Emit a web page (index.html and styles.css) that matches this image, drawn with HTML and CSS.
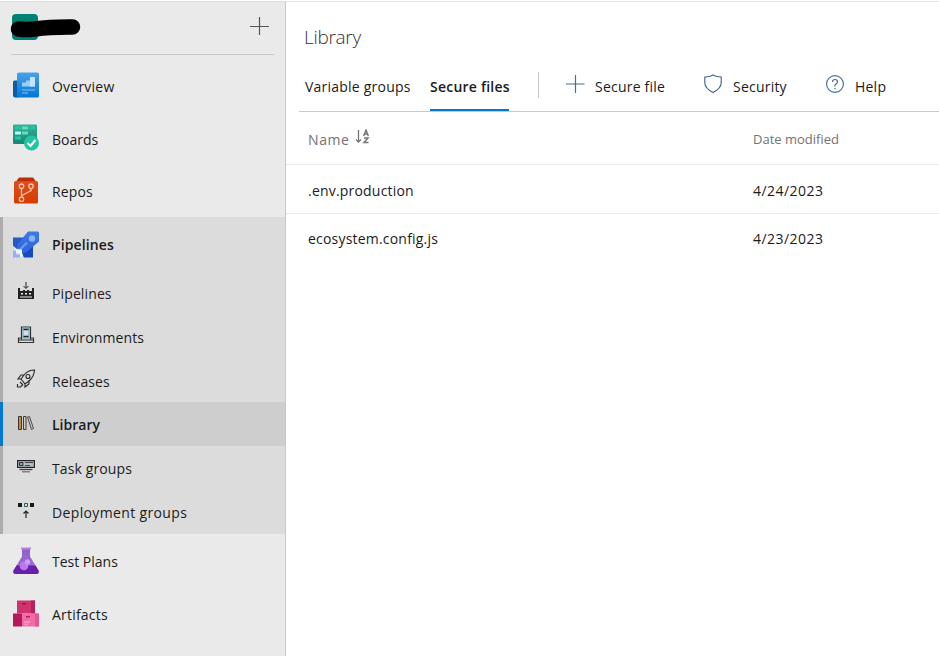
FILE: index.html
```
<!DOCTYPE html>
<html lang="en">
<head>
<meta charset="utf-8">
<title>Library</title>
<link rel="stylesheet" href="styles.css">
</head>
<body>
<div class="app">
  <nav class="sidebar">
    <header class="project">
      <svg class="project-logo" width="74" height="28" viewBox="0 0 74 28"><rect x="3" y="0" width="26" height="26" rx="4" fill="#008272"/><path d="M9.500 15 Q17 16 26 15 Q40 12.8 63.500 13" fill="none" stroke="#000" stroke-width="15.5" stroke-linecap="round"/></svg>
      <svg width="19" height="19" viewBox="0 0 19 19"><path d="M9.5 0V18M0 9.5H19" stroke="#555" stroke-width="1.2"/></svg>
    </header>
    <a class="item"><svg class="icon" viewBox="0 0 26 26"><defs><linearGradient id="ov" x1="0" y1="0" x2="0" y2="1"><stop stop-color="#4da0e8"/><stop offset="1" stop-color="#0078d7"/></linearGradient></defs><path d="M0 9.5Q0 8 1.5 8H6V25H2Q0 25 0 23Z" fill="#0d5ca5"/><rect x="4" width="22" height="25" rx="1.500" fill="url(#ov)"/><path d="M9 13V10H13V8H17V4.500H22V14H9Z" fill="#9ccdf5"/><path d="M17 4.500H22V14H17Z" fill="#c7e4fb"/><path d="M9 17.500H22M9 20.500H15" stroke="#83c1f5"/></svg><span class="label overview">Overview</span></a>
    <a class="item"><svg class="icon" viewBox="0 0 26 26"><defs><linearGradient id="bd" x1="0" y1="0" x2="0" y2="1"><stop stop-color="#37b095"/><stop offset="1" stop-color="#178477"/></linearGradient></defs><rect width="24" height="19.500" rx="1" fill="url(#bd)"/><path d="M2 2H8V5H2ZM16 2H22V5H16ZM2 12H8V15H2Z" fill="#21c5a5"/><path d="M9 2H15V5H9ZM9 7H15V10H9Z" fill="#5de0bb"/><path d="M2 7H8V10H2Z" fill="#b0fff0"/><circle cx="18.500" cy="18.500" r="7.500" fill="#20c5a5"/><path d="M14.500 18.500 17.500 21.500 22.500 15.500" fill="none" stroke="#fff" stroke-width="2"/></svg><span class="label boards">Boards</span></a>
    <a class="item"><svg class="icon" viewBox="0 0 26 26"><defs><linearGradient id="rp" x1="0" y1="0" x2="0" y2="1"><stop stop-color="#d94f20"/><stop offset="1" stop-color="#d83b01"/></linearGradient></defs><path d="M3 4 6 0H20L23 4Z" fill="#b92e08"/><path d="M1 5Q1 3.500 2.500 3.500H23.500Q25 3.500 25 5V24.500Q25 26 23.500 26H2.500Q1 26 1 24.500Z" fill="url(#rp)"/><g fill="none" stroke="#ffc1a6" stroke-width="1.300"><circle cx="8.500" cy="8.700" r="2.200"/><circle cx="18" cy="8.700" r="2.200"/><circle cx="8.500" cy="21.700" r="2.200"/><path d="M8.500 11V19.500M18 11V13L9 18"/></g></svg><span class="label repos">Repos</span></a>
    <section class="group">
      <a class="item strong"><svg class="icon" viewBox="0 0 26 26"><defs><linearGradient id="pl" x1="0" y1="0" x2="0" y2="1"><stop stop-color="#4078e8"/><stop offset="1" stop-color="#2c64d9"/></linearGradient></defs><path d="M0 6H12L4 18 0 14Z" fill="#2858c4"/><path d="M20 13V26H11L9 22Z" fill="#1748bd"/><path d="M15 0H24.500Q26 0 26 1.500V10L13 21 10 22 4 16 5 12Z" fill="url(#pl)"/><circle cx="19" cy="7" r="3.200" fill="#8bb1fa"/><path d="M6 19 14 11" stroke="#6e9af4" stroke-width="2"/><path d="M2 16 4 18H9V22L10 24 7 26V22L1 21Z" fill="#eef4ff"/><path d="M0 19H3V23H7V26H0Z" fill="#91b2f5"/></svg><span class="label pipes">Pipelines</span></a>
      <a class="sub"><svg class="glyph" viewBox="0 0 18 18"><path d="M9 0V6M6.500 4 9 6.500 11.500 4" fill="none" stroke="#222"/><path d="M1 6H3V9H6V8H8V9H10V8H12V9H15V6H17V17H1Z" fill="#222"/><path d="M4 11H6V12.500H4ZM8 11H10V12.500H8ZM12 11H14V12.500H12ZM3 14.500H15V15.500H3Z" fill="#eee"/></svg><span class="label subpipes">Pipelines</span></a>
      <a class="sub"><svg class="glyph" viewBox="0 0 18 18"><path d="M4.500 13.500V1H13.500V13.500M4.500 12H1.500V16.500H16.500V12H13.500M2 14H16" fill="none" stroke="#333" stroke-width="1.200"/><path d="M6 2V12H12V2Z" fill="none" stroke="#51a7ce"/><path d="M6.500 3.500H11.500M6.500 10.500H11.500" stroke="#222" stroke-width="1.300"/></svg><span class="label env">Environments</span></a>
      <a class="sub"><svg class="glyph wide" viewBox="0 0 20 20"><g fill="none" stroke="#2b2b2b" stroke-width="1.150"><path d="M18.500 1Q12 1 8 6L5 10 9 15 13 12Q18 8 18.500 1ZM8 6H5L2 10H5M13 11V15L9 18V15M4 13 7 16M1.500 15V18H4.500L7 15.500"/><circle cx="12" cy="7.500" r="2"/></g></svg><span class="label rel">Releases</span></a>
      <a class="sub selected"><svg class="glyph" viewBox="0 0 18 18"><path d="M1.500 2.500H4.500V15.500H1.500Z" fill="#bf8c45" stroke="#3b352c"/><path d="M6.500 2.500H9V15.500H6.500Z" fill="#d4cec2" stroke="#3a3a42"/><path d="M10.500 3 12.500 2.500 16.500 14.500 14.500 15.500Z" fill="#b8c8ce" stroke="#594b42"/></svg><span class="label lib">Library</span></a>
      <a class="sub"><svg class="glyph" viewBox="0 0 18 18"><rect x=".6" y="2.600" width="16.800" height="6.800" fill="#bbb" stroke="#27222e" stroke-width="1.200"/><path d="M2.500 4.500H6V7.500H2.500Z" fill="#78a9bf" stroke="#333"/><path d="M8 4.500H16M8 7.500H13" stroke="#444"/><path d="M2.500 11.500H15.500" stroke="#444" stroke-width="1.400"/><path d="M5 13.800H13" stroke="#777" stroke-width="1.300"/></svg><span class="label task">Task groups</span></a>
      <a class="sub"><svg class="glyph" viewBox="0 0 18 18"><path d="M1 1H5V5H1ZM13 1H17V5H13Z" fill="#181818"/><path d="M7.500 1.500H10.500V4.500H7.500Z" fill="none" stroke="#255c72"/><path d="M9 16V9M6.500 11.500 9 9 11.500 11.500" fill="none" stroke="#252525" stroke-width="1.200"/></svg><span class="label deploy">Deployment groups</span></a>
    </section>
    <a class="item"><svg class="icon" viewBox="0 0 26 26"><defs><linearGradient id="tp" x1="0" y1="0" x2="0" y2="1"><stop stop-color="#9060c6"/><stop offset="1" stop-color="#a56de0"/></linearGradient></defs><path d="M9 1H17V9L25.500 23Q26.500 26.500 23 26.500H3Q-.5 26.500 .5 23L9 9Z" fill="url(#tp)"/><path d="M3.500 18H22.500L25.500 23Q26.500 26.500 23 26.500H3Q-.5 26.500 .5 23Z" fill="#671fac"/><path d="M8 0H18V2H8Z" fill="#b883e5"/><circle cx="11" cy="18.500" r="4.300" fill="#b77ae9"/><circle cx="14.500" cy="14.500" r="2.700" fill="#c99cf0"/></svg><span class="label test">Test Plans</span></a>
    <a class="item"><svg class="icon" viewBox="0 0 26 26"><path d="M4 0H22V13H4Z" fill="#cf3470"/><path d="M18 0H22V13H18Z" fill="#b82060"/><path d="M0 13H9V26H0Z" fill="#b4195b"/><path d="M9 13H26V26H9Z" fill="#f06ca4"/><path d="M22 13H26V26H22Z" fill="#e35693"/><path d="M9 2.500H13V4H9Z" fill="#9d174d"/><path d="M4 15.500H8V17H4ZM13 15.500H17V17H13Z" fill="#bd1c5f"/><path d="M11 21.500H17M11 24H15" stroke="#f69dc1" stroke-width="1.500"/></svg><span class="label art">Artifacts</span></a>
  </nav>
  <main class="content">
    <h1 class="title"><span class="title-text">Library</span></h1>
    <div class="toolbar">
      <span class="tab first"><span class="vg">Variable groups</span></span>
      <span class="tab active"><span class="sf">Secure files</span></span>
      <span class="divider"></span>
      <a class="command add"><svg width="20" height="20" viewBox="0 0 20 20"><path d="M10.500 1V19M1 10H19.500" stroke="#486991" stroke-width="1.200"/></svg><span class="cf">Secure file</span></a>
      <a class="command security"><svg width="20" height="20" viewBox="0 0 20 20"><path d="M10 1Q7 3 1.800 3V9Q2 14.500 10 18.500Q18 14.500 18.200 9V3Q13 3 10 1Z" fill="none" stroke="#3f6791" stroke-width="1.150"/></svg><span class="sec">Security</span></a>
      <a class="command helplink"><svg width="20" height="20" viewBox="0 0 20 20"><circle cx="10" cy="10" r="8.400" fill="none" stroke="#44709b" stroke-width="1.150"/><path d="M7.500 8Q7.500 5.500 10 5.500T12.500 8Q12.500 9 11 10T10 12.500M10 14V15.300" fill="none" stroke="#526786" stroke-width="1.200"/></svg><span class="hlp">Help</span></a>
    </div>
    <div class="row head"><span class="name"><span class="nm">Name</span><svg class="sort" width="16" height="16" viewBox="0 0 16 16"><path d="M3.500 1V13M1 10.500 3.500 13 6 10.500" fill="none" stroke="#777" stroke-width="1.300"/><path d="M8.700 7 11 1 13.300 7M9.500 5H12.500M9 9H13L9 13.500H13.500" fill="none" stroke="#777" stroke-width="1.500"/></svg></span><span class="date"><span class="dm">Date modified</span></span></div>
    <div class="row first-row"><span class="name"><span class="envp">.env.production</span></span><span class="date"><span class="d">4/24/2023</span></span></div>
    <div class="row last"><span class="name"><span class="eco">ecosystem.config.js</span></span><span class="date"><span class="d">4/23/2023</span></span></div>
  </main>
</div>
</body>
</html>
```
FILE: styles.css
```
* { box-sizing: border-box; }
body { margin: 0; background: #fff; color: #1b1b1b; font: 14px/20px "Open Sans", "Noto Sans", sans-serif; overflow: hidden; }
.app { display: flex; height: 656px; border-top: 1px solid #fff; }
.sidebar { width: 286px; flex-shrink: 0; background: #eaeaea; border-right: 1px solid #c8c8c8; border-top: 1px solid #dcdcdc; }
.project { height: 53px; margin: 0 11px; padding: 12px 5px 0 0; display: flex; justify-content: space-between; border-bottom: 1px solid #c8c8c8; }
.project > svg:last-child { margin-top: 3px; }
.project-logo { margin-left: -2px; }
.project + .item { margin-top: 5px; }
.item { height: 52.330px; padding-left: 13px; display: flex; align-items: center; }
.sidebar > .item .label { padding-top: 2px; }
.sidebar > .item .boards { padding-top: 3px; }
.icon { width: 26px; height: 27px; margin-right: 13px; margin-top: -1px; overflow: visible; }
.group { height: 317px; background: #dcdcdc; border-left: 3px solid #adadad; }
.group .item { height: 54px; padding-left: 10px; }
.strong .label { padding-top: 2px; }
.strong .icon { margin-top: 1px; }
.strong, .selected { font-weight: 600; }
.sub { height: 43.830px; padding-left: 14px; display: flex; align-items: center; }
.sub .label { padding-top: 2px; }
.glyph { width: 18px; height: 18px; margin-right: 17px; margin-top: -3px; }
.glyph.wide { width: 20px; height: 20px; margin-left: -1px; margin-right: 16px; }
.selected { margin-left: -3px; border-left: 3px solid #0078d4; background: #cecece; }
.group + .item, .group + .item + .item { height: 53px; }
.sidebar > .group + .item .label, .sidebar > .group + .item + .item .label { padding-top: 3px; }
.group + .item .icon, .group + .item + .item .icon { margin-top: 0; }
.overview { letter-spacing: .22px; }
.repos, .pipes, .subpipes, .env, .task, .rel { letter-spacing: .12px; }
.deploy { letter-spacing: .36px; }
.art { letter-spacing: .2px; }
.content { flex: 1; border-top: 1px solid #e7e7e7; }
.title { margin: 0; height: 59px; padding: 21px 0 0 18px; font-size: 19px; font-weight: 300; line-height: 28px; letter-spacing: -.3px; color: #333; }
.toolbar { height: 51px; margin-left: 13px; padding-left: 6px; display: flex; border-bottom: 1px solid #c8c8c8; letter-spacing: .22px; }
.tab { height: 50px; padding-top: 16px; white-space: nowrap; }
.first { width: 125px; }
.active { width: 79px; font-weight: 600; border-bottom: 2px solid #0078d4; }
.divider { width: 1px; height: 26px; margin: 11px 26px 0 29px; background: #c8c8c8; }
.command { display: flex; padding-top: 16px; white-space: nowrap; }
.command svg { margin: -3px 10px 0 0; }
.add { width: 138px; }
.security { width: 122px; }
.row { height: 49px; display: flex; align-items: center; border-bottom: 1px solid #eaeaea; padding-left: 22px; }
.head { height: 53px; padding-top: 3px; color: #737373; }
.head .date { padding-bottom: 2px; }
.first-row { padding-top: 3px; }
.name { width: 445px; display: flex; align-items: center; letter-spacing: .2px; }
.nm { letter-spacing: .6px; }
.sort { margin: -5px 0 0 5px; }
.dm { font-size: 13px; }
.d { letter-spacing: .45px; }
.last { border-bottom: 0; }
```
